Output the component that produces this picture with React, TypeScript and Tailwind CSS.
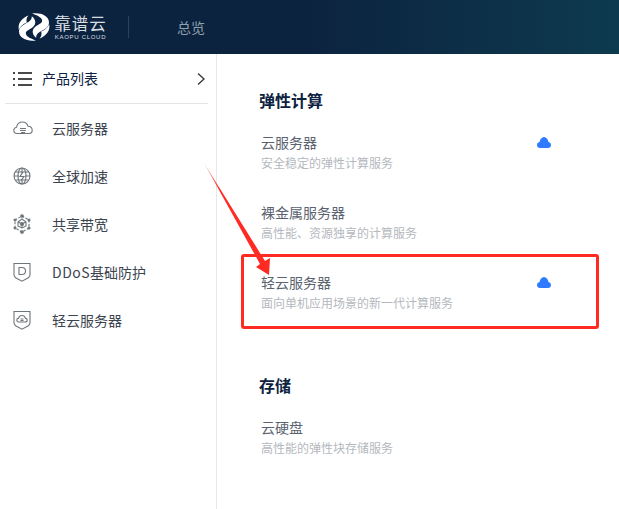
const CJK = { fontFamily: '"Noto Sans CJK SC","Noto Sans",sans-serif' };

function Logo() {
  return (
    <svg width="32" height="28" viewBox="0 0 32 28" fill="#fff" className="shrink-0">
      <path d="M14 .6C22-.8 31 2.500 31 9.500c0 5-5 7-9 9.300-3 1.800-4 3.700-3.800 6C14.500 22 13.200 17.300 17 14c3.800-3 8-3.800 7-7.200C23.200 4 18 2 14 .6z" />
      <path d="M18 27.400C10 28.800 1 25.500 1 18.500c0-5 5-7 9-9.300 3-1.800 4-3.700 3.800-6C17.500 6 18.800 10.700 15 14c-3.800 3-8 3.800-7 7.200.8 2.800 6 4.800 10 6.200z" />
      <path d="M10.500 2.500C5 4.500.6 9 .6 14.500c0 .8.100 1.500.3 2.200C2 13.500 5 11 8.800 9.500 8 7 8.600 4.500 10.500 2.500z" />
      <path d="M21.500 25.500c5.500-2 9.900-6.500 9.900-12 0-.8-.1-1.500-.3-2.200C30 14.500 27 17 23.200 18.500c.8 2.500.2 5-1.700 7z" />
    </svg>
  );
}

function CloudLine() {
  return (
    <svg width="20" height="14" viewBox="0 0 20 14" fill="none" stroke="#6f767b" strokeWidth="1.100">
      <path d="M4 12.500C2 12.500.8 11 .8 9.300.8 7.600 2 6.500 3.600 6.200 4 3 6.500 1 9.500 1c2.700 0 4.800 1.700 5.500 4.200 2.500.1 4.200 1.800 4.200 4 0 1.900-1.400 3.300-3.400 3.300z" />
      <path d="M7 7.500h6M7 9.500h6M8 11.500h4" />
    </svg>
  );
}

function Globe() {
  return (
    <svg width="18" height="18" viewBox="0 0 18 18" fill="none" stroke="#6f767b" strokeWidth="1.100">
      <circle cx="9" cy="9" r="8" />
      <ellipse cx="9" cy="9" rx="4" ry="8" />
      <path d="M1 9h5M12 9h5M2.200 5h13.600M2.200 13h13.600M9 1v5M9 12v5" />
      <path d="M10 5L7 9.500h4L8 13.500" strokeWidth="1.200" />
    </svg>
  );
}

function Hex() {
  return (
    <svg width="18" height="20" viewBox="0 0 18 20" fill="none" stroke="#6f767b" strokeWidth="1.100">
      <path d="M9 2l7 4v8l-7 4-7-4V6z" strokeDasharray="2.500 1.500" />
      <path d="M5 8l4 2 4-2M9 10v4M9 5l4 3v4l-4 2-4-2V8z" />
      <circle cx="9" cy="10" r="1.500" fill="#6f767b" />
      <circle cx="9" cy="2" r="1.300" fill="#6f767b" />
      <circle cx="9" cy="18" r="1.300" fill="#6f767b" />
      <circle cx="2" cy="6" r="1" fill="#6f767b" />
      <circle cx="16" cy="6" r="1" fill="#6f767b" />
      <circle cx="2" cy="14" r="1" fill="#6f767b" />
      <circle cx="16" cy="14" r="1" fill="#6f767b" />
    </svg>
  );
}

function ShieldD() {
  return (
    <svg width="18" height="20" viewBox="0 0 18 20" fill="none" stroke="#6f767b" strokeWidth="1.100">
      <path d="M1 1.500h16v11.500c0 1.500-1 2.300-2 3l-6 3.200-6-3.200c-1-.7-2-1.500-2-3z" />
      <path d="M6 5.500h3c2.200 0 3.500 1.400 3.500 3.500S11.200 12.500 9 12.500H6z" />
    </svg>
  );
}

function ShieldCloud() {
  return (
    <svg width="18" height="20" viewBox="0 0 18 20" fill="none" stroke="#6f767b" strokeWidth="1.100">
      <path d="M1 1.500h16v11.500c0 1.500-1 2.300-2 3l-6 3.200-6-3.200c-1-.7-2-1.500-2-3z" />
      <path d="M5.800 12C4.500 12 3.800 11 3.800 10s.8-1.800 1.800-1.900C6 6.500 7.400 5.500 9 5.500s2.900 1 3.300 2.600c1.100.1 1.900.9 1.900 1.900s-.8 2-2 2z" />
      <path d="M7.500 9h3M7.500 10.500h3" />
    </svg>
  );
}

function BlueCloud() {
  return (
    <svg width="14" height="11" viewBox="0 0 14 11" fill="#2f7bff">
      <path d="M3 11C1.300 11 0 9.800 0 8.200 0 6.600 1 5.400 2.500 5.100 3 2.200 4.800 0 7 0s4 2.200 4.500 5.100C13 5.400 14 6.600 14 8.200 14 9.800 12.700 11 11 11z" />
    </svg>
  );
}

const side = [
  { icon: <CloudLine />, latin: "", label: "云服务器" },
  { icon: <Globe />, latin: "", label: "全球加速" },
  { icon: <Hex />, latin: "", label: "共享带宽" },
  { icon: <ShieldD />, latin: "DDoS", label: "基础防护" },
  { icon: <ShieldCloud />, latin: "", label: "轻云服务器" },
];

function Product({ title, desc, cloud }: { title: string; desc: string; cloud?: boolean }) {
  return (
    <div className="h-[70px] ml-[2px] flex flex-col relative">
      <div className="text-[14px] leading-[20px] text-[#5b6270] mt-[12px]">{title}</div>
      <div className="text-[12px] leading-[18px] text-[#b4b8bd] mt-[2px]">{desc}</div>
      {cloud && (
        <div className="absolute left-[276px] top-[17px] flex">
          <BlueCloud />
        </div>
      )}
    </div>
  );
}

export default function App() {
  return (
    <div className="w-[619px] h-[509px] bg-white relative overflow-hidden flex flex-col" style={CJK}>
      <header className="h-[54px] shrink-0 flex items-center bg-gradient-to-r from-[#0c2340] via-[#0c2340] to-[#0d3a4f]">
        <div className="ml-[18px]">
          <Logo />
        </div>
        <div className="ml-[5px] flex flex-col items-center w-[51px]">
          <span className="text-[16.500px] leading-[20px] text-[#d9dee3] tracking-[1px] whitespace-nowrap">靠谱云</span>
          <span className="text-[6px] leading-[8px] text-[#d9dee3] tracking-[0.7px] whitespace-nowrap" style={{ fontFamily: '"Liberation Sans",sans-serif' }}>
            KAOPU CLOUD
          </span>
        </div>
        <div className="ml-[22px] w-px h-[22px] bg-[#2d4258]" />
        <span className="ml-[48px] text-[14px] text-[#8fa0ad]">总览</span>
      </header>
      <div className="flex flex-1">
        <aside className="w-[217px] shrink-0 border-r border-[#e8e8e8] pl-[5px] pr-[8px]">
          <div className="h-[50px] border-b border-[#e4e4e4] flex items-center">
            <svg width="19" height="16" viewBox="0 0 19 16" fill="none" stroke="#4a4a4a" strokeWidth="2" className="ml-[8px]">
              <path d="M5 2h14M5 8h14M5 14h14" />
              <path d="M0 2h2M0 8h2M0 14h2" />
            </svg>
            <span className="ml-[10px] text-[14px] text-[#0d2240]">产品列表</span>
            <svg width="10" height="14" viewBox="0 0 10 14" fill="none" stroke="#333" strokeWidth="1.300" className="ml-auto mr-[2px]">
              <path d="M2 1.500L8 7l-6 5.500" />
            </svg>
          </div>
          <div className="flex flex-col">
            {side.map((s) => (
              <div key={s.label} className="h-[48px] flex items-center">
                <div className="w-[47px] pl-[8px] flex items-center">{s.icon}</div>
                <span className="text-[14px] text-[#3c4450]">
                  {s.latin && <span className="tracking-[0.5px]">{s.latin}</span>}
                  {s.label}
                </span>
              </div>
            ))}
          </div>
        </aside>
        <main className="flex-1 pl-[42px]">
          <h2 className="text-[16px] leading-[22px] font-bold text-[#0d2240] mt-[35px] mb-[9px]">弹性计算</h2>
          <Product title="云服务器" desc="安全稳定的弹性计算服务" cloud />
          <Product title="裸金属服务器" desc="高性能、资源独享的计算服务" />
          <Product title="轻云服务器" desc="面向单机应用场景的新一代计算服务" cloud />
          <h2 className="text-[16px] leading-[22px] font-bold text-[#0d2240] mt-[44px] mb-[9px]">存储</h2>
          <Product title="云硬盘" desc="高性能的弹性块存储服务" />
        </main>
      </div>

      <div className="absolute left-[241px] top-[254px] w-[358px] h-[75px] border-[3px] border-[#ff2a22] rounded-[3px]" />
      <svg className="absolute left-0 top-0 pointer-events-none" width="619" height="509" viewBox="0 0 619 509">
        <defs>
          <linearGradient id="arrowFade" x1="204" y1="163" x2="268" y2="274" gradientUnits="userSpaceOnUse">
            <stop offset="0" stopColor="#ff2a22" stopOpacity="0.35" />
            <stop offset="0.25" stopColor="#ff2a22" />
          </linearGradient>
        </defs>
        <path d="M204 163L265 261 270 258 269 275 256 267 260 264z" fill="url(#arrowFade)" />
      </svg>
    </div>
  );
}
